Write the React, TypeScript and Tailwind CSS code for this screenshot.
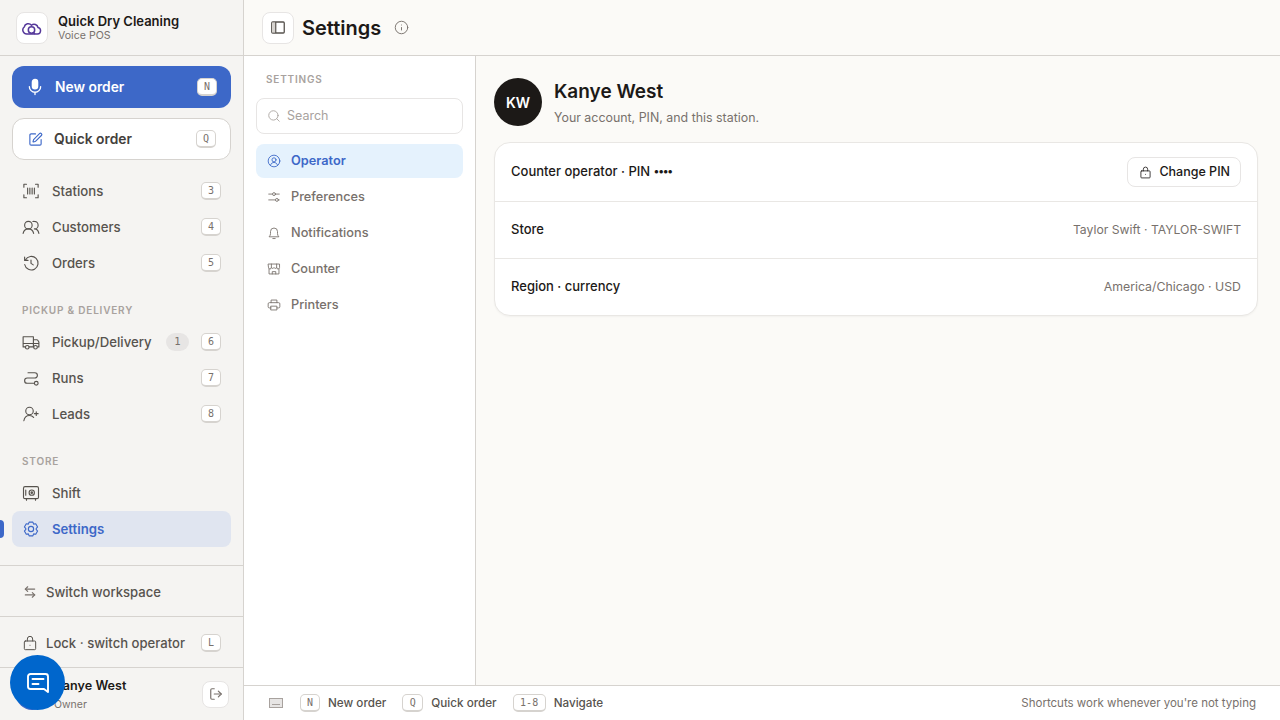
import type { ReactNode } from 'react';
import { Info, Search, SquarePen, ArrowLeftRight, LogOut } from 'lucide-react';

const iconProps = {
  width: 18,
  height: 18,
  viewBox: '0 0 24 24',
  fill: 'none',
  stroke: 'currentColor',
  strokeWidth: 1.5,
  strokeLinecap: 'round' as const,
  strokeLinejoin: 'round' as const,
};

function Svg({ size = 18, children }: { size?: number; children: ReactNode }) {
  return (
    <svg {...iconProps} width={size} height={size} className="shrink-0">
      {children}
    </svg>
  );
}

const MicIcon = () => (
  <svg {...iconProps} width={18} height={18} strokeWidth={1.8} className="mr-[11px] shrink-0">
    <rect x="8.500" y="2" width="7" height="12.500" rx="3.500" fill="currentColor" />
    <path d="M4.500 11.500a7.500 7.500 0 0 0 15 0M12 19v3" />
  </svg>
);
const StationsIcon = () => (
  <Svg>
    <path d="M6 3H2.500v4M18 3h3.500v4M6 21H2.500v-4M18 21h3.500v-4M7.500 8v8M10.500 8v8M13.500 8v8M16.500 8v8" />
  </Svg>
);
const CustomersIcon = () => (
  <Svg>
    <circle cx="8.500" cy="9.500" r="5" />
    <path d="M1.500 20.500c.8-3.600 3.500-6 7-6s6.200 2.400 7 6M14.500 4.700a5 5 0 0 1 2-.200 5 5 0 0 1 0 10c3 0 5.300 2.400 6 6" />
  </Svg>
);
const OrdersIcon = () => (
  <Svg>
    <path d="M4.500 8a9 9 0 1 1-.9 6M3.500 4v4.500H8M12 8v4.500l3 2" />
  </Svg>
);
const TruckIcon = () => (
  <Svg>
    <path d="M4.500 18.500H1.500V5h13.700v13.500H9.500M15.200 9h4.500a1.500 1.500 0 0 1 1.300.7l1.500 2.300v6.500h-1.500M15.200 18.500h.3M1.500 14h21" />
    <circle cx="7" cy="19" r="2.400" />
    <circle cx="18" cy="19" r="2.400" />
  </Svg>
);
const RunsIcon = () => (
  <Svg>
    <circle cx="19" cy="19" r="2.500" />
    <path d="M16.500 19H7a3.500 3.500 0 0 1 0-7h10a3.500 3.500 0 0 0 0-7H8" />
  </Svg>
);
const LeadsIcon = () => (
  <Svg>
    <circle cx="10" cy="8" r="5" />
    <path d="M2.500 21c.6-4 3.700-7 7.500-7 2.200 0 4.200 1 5.500 2.600M19 9v5M16.500 11.500h5" />
  </Svg>
);
const ShiftIcon = () => (
  <Svg>
    <rect x="2" y="3.500" width="20" height="16" rx="2" />
    <circle cx="13" cy="11.500" r="3.500" />
    <circle cx="13" cy="11.500" r="1" />
    <path d="M5 8v7M6 19.500v2M18 19.500v2" />
  </Svg>
);
const GearIcon = () => (
  <Svg>
    <circle cx="12" cy="12" r="3.500" />
    <path d="M9.500 2.800h5l1 2.700 2.800-.5 2.500 4.300L18.900 11.500v1l1.900 2.200-2.500 4.300-2.800-.5-1 2.700h-5l-1-2.700-2.800.5-2.500-4.300 1.900-2.200v-1L3.200 9.300 5.700 5l2.800.5z" />
  </Svg>
);
const UserCircleIcon = () => (
  <Svg size={14}>
    <circle cx="12" cy="12" r="10" />
    <circle cx="12" cy="10" r="3.500" />
    <path d="M6 19c1-3 3.300-4.500 6-4.500s5 1.500 6 4.500" />
  </Svg>
);
const SlidersIcon = () => (
  <Svg size={14}>
    <path d="M3 7h6M15 7h6M3 17h11M20 17h1" />
    <circle cx="12" cy="7" r="2.500" />
    <circle cx="17" cy="17" r="2.500" />
  </Svg>
);
const BellIcon = () => (
  <Svg size={14}>
    <path d="M4 18c1.200-1.500 2-2.500 2-5V9.500a6 6 0 0 1 12 0V13c0 2.500.8 3.500 2 5zM10 21.500h4" />
  </Svg>
);
const StoreIcon = () => (
  <Svg size={14}>
    <path d="M2.500 3.500h19v6a2.500 2.500 0 0 1-5 0 2.500 2.500 0 0 1-4.500 0 2.500 2.500 0 0 1-4.500 0 2.500 2.500 0 0 1-5 0zM3.500 12v8.500h17V12M7.500 3.500v6M16.500 3.500v6M9 20.500v-4h6v4" />
  </Svg>
);
const PrinterIcon = () => (
  <Svg size={14}>
    <path d="M7 8V3.500h10V8M7 17H4a2 2 0 0 1-2-2v-5a2 2 0 0 1 2-2h16a2 2 0 0 1 2 2v5a2 2 0 0 1-2 2h-3" />
    <path d="M7 14h10v6.500H7z" />
  </Svg>
);
const LockIcon = ({ size = 16 }: { size?: number }) => (
  <Svg size={size}>
    <rect x="3.500" y="9" width="17" height="13" rx="1.500" />
    <path d="M8 9V6a4 4 0 0 1 8 0v3M12 15.500h.01" />
  </Svg>
);
const PanelIcon = () => (
  <svg width="14" height="13" viewBox="0 0 14 13" className="text-[#57534e]">
    <rect x="0.750" y="1" width="12.500" height="11" rx="1" fill="none" stroke="currentColor" strokeWidth="1.300" />
    <path d="M1 1.500h3.500v10H1z" fill="#d6d3cf" />
    <path d="M4.750 1v11" stroke="currentColor" strokeWidth="1.200" />
  </svg>
);
const ChatIcon = () => (
  <svg {...iconProps} width={24} height={24} strokeWidth={1.9}>
    <path d="M4.500 3h15A2.500 2.500 0 0 1 22 5.500V21l-4-3H4.500A2.500 2.500 0 0 1 2 15.500v-10A2.500 2.500 0 0 1 4.500 3zM6.500 8h11M6.500 13h6" />
  </svg>
);

function Kbd({ children, className = '' }: { children: ReactNode; className?: string }) {
  return (
    <span
      className={`flex h-[18px] min-w-5 items-center justify-center rounded-[5px] border border-b-2 border-[#d6d3cf] bg-white px-1 font-['DejaVu_Sans_Mono',monospace] text-[10px] text-[#78716c] ${className}`}
    >
      {children}
    </span>
  );
}

function NavItem({ icon, label, kbd, badge }: { icon: ReactNode; label: string; kbd: string; badge?: string }) {
  return (
    <div className="flex h-9 items-center rounded-lg px-[10px] text-[13.200px] font-medium text-[#57534e]">
      <span className="flex w-[30px] text-[#57534e]">{icon}</span>
      <span className="flex-1 pt-[2px]">{label}</span>
      {badge && (
        <span className="mr-3 flex h-[18px] w-[23px] items-center justify-center rounded-full bg-[#e7e5e4] font-['DejaVu_Sans_Mono',monospace] text-[10.500px] text-[#78716c]">
          {badge}
        </span>
      )}
      <Kbd>{kbd}</Kbd>
    </div>
  );
}

function SectionLabel({ children }: { children: ReactNode }) {
  return <div className="pb-[6px] pl-[10px] text-[10px] font-semibold tracking-[0.08em] text-[#a8a29e]">{children}</div>;
}

function SubNavItem({ icon, label, active }: { icon: ReactNode; label: string; active?: boolean }) {
  return (
    <div
      className={`flex h-[34px] items-center gap-[10px] rounded-lg px-[11px] text-[12.750px] ${
        active ? 'bg-[#e5f2fd] font-semibold text-[#3d68c8]' : 'font-medium text-[#78716c]'
      }`}
    >
      {icon}
      {label}
    </div>
  );
}

function Row({ label, children }: { label: ReactNode; children: ReactNode }) {
  return (
    <div className="flex flex-1 items-center justify-between border-b border-[#e9e7e4] px-4 first:h-[59px] first:flex-none last:border-b-0">
      <span className="text-[13px] font-medium text-[#1c1917]">{label}</span>
      {children}
    </div>
  );
}

export default function App() {
  return (
    <div className="flex h-screen overflow-hidden bg-[#fbfaf7] font-['Inter',sans-serif] text-[#1c1917]">
      <aside className="flex w-[244px] shrink-0 flex-col border-r border-[#d6d3cf] bg-[#f5f4f2]">
        <div className="flex h-14 shrink-0 items-center gap-[10px] border-b border-[#d6d3cf] px-4">
          <div className="flex h-8 w-8 items-center justify-center rounded-lg border border-[#e7e5e4] bg-white">
            <svg width="20" height="16" viewBox="0 0 20 16" fill="none" stroke="#55389a" strokeWidth="1.500">
              <path d="M5 14h10.500a3.300 3.300 0 0 0 .5-6.500 4 4 0 0 0-6.500-2.300A4.200 4.200 0 0 0 2.200 7 4 4 0 0 0 5 14z" />
              <circle cx="9.500" cy="10" r="3.200" />
              <path d="M11.500 12.500l1.500 1.500" />
            </svg>
          </div>
          <div>
            <div className="text-[13px] leading-[16px] font-semibold text-[#1c1917]">Quick Dry Cleaning</div>
            <div className="text-[10.600px] leading-[14px] text-[#78716c]">Voice POS</div>
          </div>
        </div>

        <div className="flex flex-col gap-[10px] px-3 pt-[10px] pb-[13px]">
          <div className="flex h-[42px] items-center rounded-xl bg-[#3d68c8] pr-[14px] pl-[14px] text-white">
            <MicIcon />
            <span className="flex-1 pt-px text-[13.800px] font-semibold">New order</span>
            <Kbd>N</Kbd>
          </div>
          <div className="flex h-[42px] items-center rounded-xl border border-[#d6d3cf] bg-white pr-[14px] pl-[15px]">
            <SquarePen size={15} className="mr-[11px] text-[#3d68c8]" strokeWidth={1.8} />
            <span className="flex-1 pt-px text-[13.800px] font-semibold text-[#44403c]">Quick order</span>
            <Kbd>Q</Kbd>
          </div>
        </div>

        <nav className="flex flex-1 flex-col px-3">
          <NavItem icon={<StationsIcon />} label="Stations" kbd="3" />
          <NavItem icon={<CustomersIcon />} label="Customers" kbd="4" />
          <NavItem icon={<OrdersIcon />} label="Orders" kbd="5" />
          <div className="h-[22px]" />
          <SectionLabel>PICKUP &amp; DELIVERY</SectionLabel>
          <NavItem icon={<TruckIcon />} label="Pickup/Delivery" kbd="6" badge="1" />
          <NavItem icon={<RunsIcon />} label="Runs" kbd="7" />
          <NavItem icon={<LeadsIcon />} label="Leads" kbd="8" />
          <div className="h-[22px]" />
          <SectionLabel>STORE</SectionLabel>
          <div className="flex h-9 items-center px-[10px] text-[13.200px] font-medium text-[#57534e]">
            <span className="flex w-[30px]">
              <ShiftIcon />
            </span>
            <span className="pt-[2px]">Shift</span>
          </div>
          <div className="relative flex h-9 items-center rounded-lg bg-[#e0e5f0] px-[10px] text-[13.200px] font-semibold text-[#3d68c8]">
            <span className="absolute top-[9px] -left-3 h-[18px] w-1 rounded-r-sm bg-[#3d68c8]" />
            <span className="flex w-[30px]">
              <GearIcon />
            </span>
            <span className="pt-[2px]">Settings</span>
          </div>
        </nav>

        <div className="flex h-[51px] shrink-0 items-center gap-[9px] border-t border-[#d6d3cf] pt-[2px] pl-[23px] text-[13.100px] font-medium text-[#57534e]">
          <ArrowLeftRight size={14} className="text-[#78716c]" />
          <span className="pt-[2px]">Switch workspace</span>
        </div>
        <div className="flex h-[51px] shrink-0 items-center gap-2 border-t border-[#d6d3cf] pt-[2px] pr-[22px] pl-[22px] text-[13.100px] font-medium text-[#57534e]">
          <LockIcon />
          <span className="flex-1 pt-[2px]">Lock · switch operator</span>
          <Kbd>L</Kbd>
        </div>
        <div className="flex h-[53px] shrink-0 items-center border-t border-[#d6d3cf] pr-[14px] pl-4">
          <div className="h-8 w-8 rounded-full bg-[#3d68c8]" />
          <div className="ml-[6px] flex-1">
            <div className="text-[12.600px] leading-[17px] font-semibold">Kanye West</div>
            <div className="mt-1 text-[10.500px] leading-[14px] text-[#78716c]">Owner</div>
          </div>
          <div className="flex h-[27px] w-[27px] items-center justify-center rounded-lg border border-[#e7e5e4] bg-white text-[#78716c]">
            <LogOut size={14} />
          </div>
        </div>
      </aside>

      <main className="flex min-w-0 flex-1 flex-col">
        <header className="flex h-14 shrink-0 items-center border-b border-[#d6d3cf] px-[18px]">
          <div className="flex h-8 w-8 items-center justify-center rounded-lg border border-[#e7e5e4] bg-white">
            <PanelIcon />
          </div>
          <h1 className="ml-2 text-[20px] font-semibold">Settings</h1>
          <Info size={15} className="ml-[13px] text-[#78716c]" strokeWidth={1.5} />
        </header>

        <div className="flex min-h-0 flex-1">
          <div className="w-[232px] shrink-0 border-r border-[#d6d3cf] bg-white px-3 pt-[17px]">
            <div className="pl-[10px] text-[10px] leading-[13px] font-semibold tracking-[0.08em] text-[#a8a29e]">SETTINGS</div>
            <div className="mt-3 mb-[10px] flex h-9 items-center gap-[6px] rounded-lg border border-[#e7e5e4] bg-white px-[10px] text-[12.500px] text-[#a8a29e]">
              <Search size={14} strokeWidth={1.5} />
              Search
            </div>
            <div className="flex flex-col gap-[2px]">
              <SubNavItem icon={<UserCircleIcon />} label="Operator" active />
              <SubNavItem icon={<SlidersIcon />} label="Preferences" />
              <SubNavItem icon={<BellIcon />} label="Notifications" />
              <SubNavItem icon={<StoreIcon />} label="Counter" />
              <SubNavItem icon={<PrinterIcon />} label="Printers" />
            </div>
          </div>

          <div className="flex-1 pt-[22px] pr-[22px] pl-[18px]">
            <div className="flex items-center gap-3">
              <div className="flex h-12 w-12 items-center justify-center rounded-full bg-[#1c1917] text-[14px] font-semibold text-white">
                KW
              </div>
              <div>
                <div className="text-[19px] leading-[26px] font-semibold">Kanye West</div>
                <div className="mt-1 text-[12.400px] leading-[17px] text-[#78716c]">Your account, PIN, and this station.</div>
              </div>
            </div>
            <div className="mt-4 flex h-[174px] flex-col rounded-2xl border border-[#e9e7e4] bg-white shadow-[0_1px_2px_rgba(0,0,0,0.04)]">
              <Row
                label={
                  <>
                    Counter operator · PIN <span className="align-[1px] text-[11px] tracking-[-1.300px]">••••</span>
                  </>
                }
              >
                <div className="flex h-[30px] items-center gap-[7px] rounded-lg border border-[#e7e5e4] pr-[10px] pl-[11px] text-[12.500px] font-medium">
                  <LockIcon size={13} />
                  Change PIN
                </div>
              </Row>
              <Row label="Store">
                <span className="text-[12.200px] text-[#78716c]">Taylor Swift · TAYLOR-SWIFT</span>
              </Row>
              <Row label="Region · currency">
                <span className="text-[12.300px] text-[#78716c]">America/Chicago · USD</span>
              </Row>
            </div>
          </div>
        </div>

        <footer className="flex h-[35px] shrink-0 items-center border-t border-[#d6d3cf] bg-white pr-6 pl-[25px] text-[11.700px] font-medium text-[#57534e]">
          <svg width="14" height="10" viewBox="0 0 14 10" className="mr-[17px] text-[#a8a29e]">
            <rect x="0.500" y="0.500" width="13" height="9" fill="#e7e5e4" stroke="currentColor" />
            <path d="M3 6.500h8" stroke="currentColor" />
          </svg>
          <Kbd className="mr-2">N</Kbd>
          <span className="pt-[2px]">New order</span>
          <Kbd className="mr-2 ml-4 w-[21px]">Q</Kbd>
          <span className="pt-[2px]">Quick order</span>
          <Kbd className="mr-2 ml-4 w-[33px]">1-8</Kbd>
          <span className="pt-[2px]">Navigate</span>
          <span className="ml-auto pt-[2px] text-[11.500px] font-normal text-[#78716c]">Shortcuts work whenever you're not typing</span>
        </footer>
      </main>

      <div className="fixed top-[655px] left-[10px] flex h-[55px] w-[55px] items-center justify-center rounded-full bg-[#0066cc] text-white">
        <ChatIcon />
      </div>
    </div>
  );
}
